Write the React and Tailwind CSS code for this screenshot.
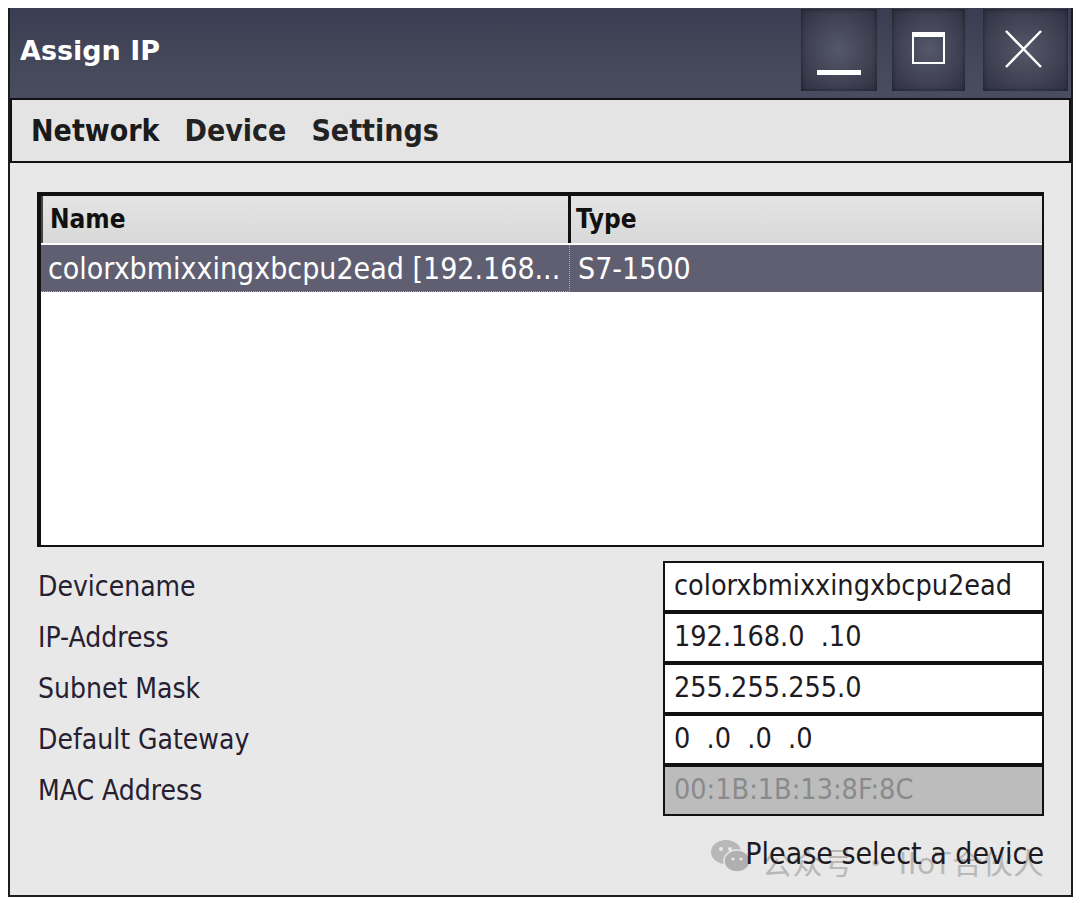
import React from "react";

const COND = "font-['DejaVu_Sans_Condensed','DejaVu_Sans',sans-serif]";

function WinButton({ w, children }) {
  return (
    <div
      className={`${w} h-[82px] flex items-center justify-center bg-[radial-gradient(ellipse_at_center,#555869_0%,#414355_55%,#2f3142_100%)] shadow-[inset_0_0_4px_rgba(0,0,0,0.5)]`}
    >
      {children}
    </div>
  );
}

const fields = [
  ["Devicename", "colorxbmixxingxbcpu2ead", false],
  ["IP-Address", "192.168.0\u00a0\u00a0.10", false],
  ["Subnet Mask", "255.255.255.0", false],
  ["Default Gateway", "0\u00a0\u00a0.0\u00a0\u00a0.0\u00a0\u00a0.0", false],
  ["MAC Address", "00:1B:1B:13:8F:8C", true],
];

export default function App() {
  return (
    <div className={`w-[1080px] h-[903px] bg-white pt-[8px] pl-[8px] ${COND}`}>
      <div className="w-[1065px] h-[889px] flex flex-col bg-[#e8e8e8] border-x-2 border-b-2 border-[#1c1c1c]">
        {/* Title bar */}
        <div className="h-[90px] flex items-start justify-between bg-[linear-gradient(to_bottom,#3a3c51,#44465a_55%,#4a4c5f)]">
          <div className="h-[86px] flex items-center pl-[10px] font-['DejaVu_Sans',sans-serif] font-bold text-[27px] text-white">
            Assign IP
          </div>
          <div className="flex pt-[1px] pr-[3px]">
            <WinButton w="w-[76px]">
              <div className="w-[44px] h-[5px] bg-white mt-[44px]" />
            </WinButton>
            <div className="w-[15px]" />
            <WinButton w="w-[73px]">
              <div className="w-[33px] h-[32px] border-2 border-t-[5px] border-white -mt-[4px]" />
            </WinButton>
            <div className="w-[18px]" />
            <WinButton w="w-[85px]">
              <svg width="39" height="40" viewBox="0 0 39 40" className="-mt-[2px] -ml-[4px]">
                <path d="M2 2 L37 38 M37 2 L2 38" stroke="white" strokeWidth="2.5" fill="none" />
              </svg>
            </WinButton>
          </div>
        </div>

        {/* Menu bar */}
        <div className="h-[65px] flex items-center gap-[25px] pl-[19px] bg-[#e4e4e4] border-2 border-[#111] text-[30px] font-bold text-[#1a1a1a]">
          <span>Network</span>
          <span className="text-[#222]">Device</span>
          <span className="text-[#222]">Settings</span>
        </div>

        {/* Content */}
        <div className="flex-1 px-[27px] pt-[29px] flex flex-col">
          {/* Table */}
          <div className="h-[355px] bg-white border-t-[4px] border-l-[4px] border-r-2 border-b-2 border-[#111] flex flex-col">
            <div className="h-[49px] flex bg-[linear-gradient(to_bottom,#e4e4e4,#d8d8d8)] border-b-2 border-white">
              <div className="w-[527px] flex items-center pl-[7px] text-[26px] font-bold text-[#111] border-l-2 border-[#444]">
                Name
              </div>
              <div className="flex-1 flex items-center pl-[5px] border-l-[3px] border-[#111] text-[26px] font-bold text-[#111]">
                Type
              </div>
            </div>
            <div className="h-[47px] flex bg-[#5f5f71] text-white text-[30px]">
              <div className="w-[529px] flex items-center pl-[7px] border-r border-b border-dotted border-[#a8a8b8] whitespace-nowrap overflow-hidden">
                colorxbmixxingxbcpu2ead [192.168...
              </div>
              <div className="flex-1 flex items-center pl-[8px]">S7-1500</div>
            </div>
          </div>

          {/* Form */}
          <div className="mt-[14px] grid grid-cols-[1fr_381px]">
            <div className="flex flex-col pl-[1px]">
              {fields.map(([label]) => (
                <div key={label} className="h-[51px] flex items-center text-[28px] text-[#262030]">
                  {label}
                </div>
              ))}
            </div>
            <div className="flex flex-col">
              {fields.map(([label, value, disabled]) => (
                <div
                  key={label}
                  className={`h-[51px] flex items-center pl-[9px] border-2 border-[#111] text-[28.5px] whitespace-nowrap ${
                    disabled ? "bg-[#bcbcbc] text-[#8a8a8a]" : "bg-white text-[#1e1a22]"
                  }`}
                >
                  {value}
                </div>
              ))}
            </div>
          </div>

          {/* Status */}
          <div className="relative mt-[15px] flex justify-end">
            <div className="absolute left-[673px] top-[2px] flex items-center gap-[10px] text-[#b8b8b8] whitespace-nowrap">
              <svg width="42" height="36" viewBox="0 0 42 36">
                <ellipse cx="16" cy="14" rx="15" ry="12" fill="#b8b8b8" />
                <ellipse cx="27" cy="23" rx="13" ry="11" fill="#b0b0b0" stroke="#e8e8e8" strokeWidth="1.5" />
                <circle cx="11" cy="11" r="2" fill="#e8e8e8" />
                <circle cx="20" cy="11" r="2" fill="#e8e8e8" />
                <circle cx="23" cy="21" r="1.6" fill="#e8e8e8" />
                <circle cx="31" cy="21" r="1.6" fill="#e8e8e8" />
              </svg>
              <span className="text-[30px] leading-[36px] font-['Noto_Sans_CJK_SC',sans-serif] mt-[10px] tracking-[0.5px]">
                公众号 · IIoT合伙人
              </span>
            </div>
            <span className="relative text-[30px] text-[#1e1a22]">Please select a device</span>
          </div>
        </div>
      </div>
    </div>
  );
}
